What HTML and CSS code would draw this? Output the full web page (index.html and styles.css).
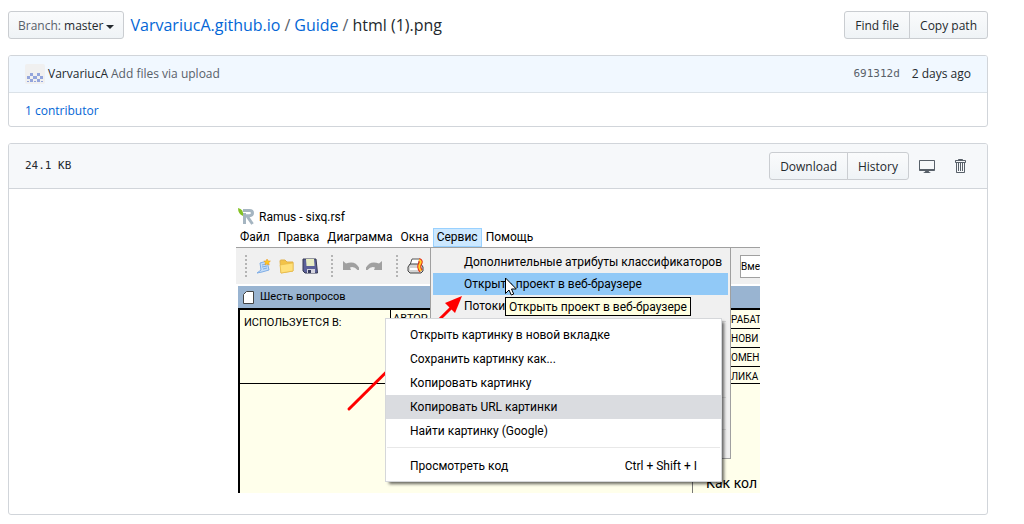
FILE: index.html
```
<!DOCTYPE html>
<html lang="en">
<head>
<meta charset="utf-8">
<title>html (1).png</title>
<link rel="stylesheet" href="styles.css">
</head>
<body>
<main class="page">
  <header class="file-nav">
    <button class="btn branch" type="button"><span class="muted">Branch:</span> <span>master</span><span class="caret"></span></button>
    <nav class="crumbs"><a class="repo" href="#">VarvariucA.github.io</a><span class="slash">/</span><a href="#">Guide</a><span class="slash">/</span><strong>html (1).png</strong></nav>
    <div class="group"><button class="btn" type="button">Find file</button><button class="btn" type="button">Copy path</button></div>
  </header>

  <section class="box commit">
    <div class="commit-row">
      <svg class="avatar" viewBox="0 0 20 20" aria-hidden="true"><rect width="20" height="20" rx="2" fill="#f0f0f0"/><path fill="#93a5dc" d="M5 9h3v3H5zM12 9h3v3h-3zM2 12h3v3H2zM8 12h4v3H8zM15 12h3v3h-3zM5 15h3v3H5zM12 15h3v3h-3zM2 17h2v1H2zM9 17h2v1H9zM16 17h2v1h-2z"/></svg>
      <a class="author" href="#">VarvariucA</a>
      <a class="message" href="#">Add files via upload</a>
      <a class="sha" href="#">691312d</a>
      <span class="date">2 days ago</span>
    </div>
    <div class="contributors"><a href="#"><strong>1</strong> contributor</a></div>
  </section>

  <section class="box file">
    <div class="file-head">
      <span class="size">24.1 KB</span>
      <div class="group"><button class="btn" type="button">Download</button><button class="btn" type="button">History</button></div>
      <button class="icon-btn" type="button" aria-label="Open in desktop"><svg width="16" height="16" viewBox="0 0 16 16"><path fill="#586069" fill-rule="evenodd" d="M15 2H1c-.55 0-1 .45-1 1v9c0 .55.45 1 1 1h5.340c-.25.610-.860 1.390-2.340 2h8c-1.480-.610-2.090-1.390-2.340-2H15c.55 0 1-.45 1-1V3c0-.55-.45-1-1-1zm0 9H1V3h14v8z"/></svg></button>
      <button class="icon-btn trash" type="button" aria-label="Delete this file"><svg width="12" height="16" viewBox="0 0 12 16"><path fill="#586069" fill-rule="evenodd" d="M11 2H9c0-.55-.45-1-1-1H5c-.55 0-1 .45-1 1H2c-.55 0-1 .45-1 1v1c0 .55.45 1 1 1v9c0 .55.45 1 1 1h7c.55 0 1-.45 1-1V5c.55 0 1-.45 1-1V3c0-.55-.45-1-1-1zm-1 12H3V5h1v8h1V5h1v8h1V5h1v8h1V5h1v9zm1-10H2V3h9v1z"/></svg></button>
    </div>

    <div class="preview">
      <div class="shot">
        <div class="win-title">
          <svg width="17" height="17" viewBox="0 0 17 17" aria-hidden="true"><path fill="none" stroke="#a5b5c1" stroke-width="3" d="M5 2.500h6.500q3 0 3 2.600t-3 2.600H7M6.500 5v11M9 8l5.500 8"/><path fill="#84c225" d="M0 0q6 1 5 8Q0 6 0 0z"/></svg>
          <span>Ramus - sixq.rsf</span>
        </div>
        <div class="menubar"><span>Файл</span><span>Правка</span><span>Диаграмма</span><span>Окна</span><span class="open">Сервис</span><span>Помощь</span></div>
        <div class="toolbar">
          <i class="grip"></i>
          <svg class="new" width="16" height="16" viewBox="0 0 16 16"><path fill="#c4ddf7" stroke="#7fade6" d="M4 5l7-2 2 9-7 2-5 1 4-3z"/><path stroke="#7fade6" d="M6 7l4-1M6 9l5-1M7 11l4-1"/><path fill="#ffc91f" stroke="#ed9b21" stroke-width=".6" d="M11 1l1 2 2.400.1-1.700 1.600.5 2.300-2.200-1.100-2 1.100.5-2.300-1.600-1.600 2.400-.2z"/></svg>
          <svg class="folder" width="16" height="16" viewBox="0 0 16 16"><path fill="#f3c348" stroke="#e0b04a" d="M1 3q0-1 1-1h4l2 2h6v9L2 15z"/><path fill="#ffe07a" stroke="#e6b842" stroke-width=".6" d="M1 7l13-2v8L2 15z"/></svg>
          <svg class="disk" width="16" height="16" viewBox="0 0 16 16"><path fill="#5c6199" stroke="#343952" d="M1 1h13l1.500 14H3L1 13z"/><path fill="#e8edc5" d="M4 1h8l.5 7h-8z"/><path fill="#d5d5df" d="M5 11h8v4H5z"/><path fill="#363b5c" d="M6 12h3v3H6z"/></svg>
          <i class="grip"></i>
          <svg class="undo" width="16" height="16" viewBox="0 0 16 16"><path fill="#a0a0a0" d="M0 3l3 2.500q9-3.500 13 4V12h-1.500q-3.500-4-7.500-2.500L8 12H0z"/></svg>
          <svg class="redo" width="16" height="16" viewBox="0 0 16 16"><path fill="#a0a0a0" d="M16 3l-3 2.500Q4 2 0 9.500V12h1.500Q5 8 9 9.500L8 12h8z"/></svg>
          <i class="grip"></i>
          <svg class="print" width="17" height="16" viewBox="0 0 17 16"><path fill="#fff" stroke="#555" d="M5 1h8l-2 6H3z"/><path fill="#d4d4d4" stroke="#444" d="M3 6h11l2 3v4l-2 2H3l-2-2V9z"/><path stroke="#fff" stroke-width="2" d="M3 11h9"/><path fill="none" stroke="#e52d18" stroke-width="4" d="M12 2q3 1 1 4t1 7"/><path fill="none" stroke="#ffcf29" stroke-width="2" d="M12 2q3 1 1 4t1 7"/></svg>
          <span class="combo">Вме</span>
        </div>
        <div class="tab"><svg width="11" height="13" viewBox="0 0 11 13" aria-hidden="true"><path fill="#fff" stroke="#444" d="M3.500.5h7v12H.5v-9z"/></svg><span>Шесть вопросов</span></div>
        <div class="diagram">
          <div class="frame">
            <div class="used">ИСПОЛЬЗУЕТСЯ В:</div>
            <div class="mid">АВТОР</div>
            <div class="states"><div>РАБАТ</div><div>НОВИ</div><div>ОМЕН</div><div>ЛИКА</div></div>
          </div>
          <div class="block">Как кол</div>
        </div>

        <div class="dropdown">
          <div>Дополнительные атрибуты классификаторов</div>
          <div class="active">Открыть проект в веб-браузере</div>
          <div>Потоки</div>
          <hr class="first"><hr class="second"><hr class="third">
        </div>
        <svg class="arrow" width="120" height="120" viewBox="0 0 120 120" aria-hidden="true"><path stroke="#f00" stroke-width="3" stroke-linecap="round" d="M3 114L106 12"/><path fill="#f00" d="M116 1l-7 17-10-10z"/></svg>
        <div class="tooltip">Открыть проект в веб-браузере</div>
        <svg class="cursor" width="12" height="19" viewBox="0 0 12 19" aria-hidden="true"><path fill="#fff" stroke="#000" d="M.5 1v15.500L4 13l2.300 5 2.400-1-2.200-5h4.800z"/></svg>
        <div class="context">
          <div>Открыть картинку в новой вкладке</div>
          <div>Сохранить картинку как...</div>
          <div>Копировать картинку</div>
          <div class="active">Копировать URL картинки</div>
          <div>Найти картинку (Google)</div>
          <hr>
          <div class="last"><span>Просмотреть код</span><span>Ctrl + Shift + I</span></div>
        </div>
      </div>
    </div>
  </section>
</main>
</body>
</html>
```
FILE: styles.css
```
* { box-sizing: border-box; }
body {
  margin: 0;
  background: #fff;
  color: #24292e;
  font: 12px/18px "Open Sans", "Noto Sans", sans-serif;
}
a { color: #0366d6; text-decoration: none; }
button { font: inherit; color: inherit; }
.page { margin: 11px 36px 0 8px; }
.file-nav { display: flex; align-items: center; margin-bottom: 16px; }
.btn {
  height: 28px;
  padding: 0 10px;
  border: 1px solid #cacdd1;
  border-radius: 3px;
  background: linear-gradient(#fafbfc, #eff3f6);
  font-weight: 500;
  line-height: 28px;
  white-space: nowrap;
}
.branch { padding: 0 9px; }
.muted { color: #586069; font-weight: 400; }
.caret {
  display: inline-block;
  margin-left: 2px;
  border: 4px solid transparent;
  border-top-color: #24292e;
  border-bottom: 0;
  vertical-align: middle;
}
.group { display: flex; }
.group .btn:first-child { border-radius: 3px 0 0 3px; }
.group .btn + .btn { margin-left: -1px; border-radius: 0 3px 3px 0; }
.crumbs { flex: 1; margin-left: 7px; font-size: 16px; line-height: 28px; }
.crumbs a.repo, .crumbs strong { font-weight: 500; }
.slash { margin: 0 4px; color: #586069; }
.box { border: 1px solid #d1d5da; border-radius: 3px; overflow: hidden; }
.commit { margin-bottom: 16px; }
.commit-row {
  display: flex;
  align-items: center;
  height: 37px;
  padding: 0 16px;
  border-bottom: 1px solid #dbe2e8;
  background: #f1f8ff;
}
.avatar { width: 20px; height: 20px; margin-right: 3px; }
.author { margin-right: 3px; color: #24292e; font-weight: 500; }
.message { flex: 1; color: #586069; }
.sha { margin-right: 12px; color: #586069; font-family: "DejaVu Sans Mono", monospace; font-size: 11px; }
.contributors { padding: 9px 16px 6px; }
.contributors strong { font-weight: 500; }
.file-head {
  display: flex;
  align-items: center;
  height: 45px;
  padding: 0 21px 0 16px;
  border-bottom: 1px solid #d1d5da;
  background: #f6f8fa;
}
.size { flex: 1; font-family: "DejaVu Sans Mono", monospace; font-size: 11px; }
.icon-btn { display: flex; margin-left: 10px; padding: 0; border: 0; background: none; }
.trash { margin-left: 19px; }

.preview { display: flex; justify-content: center; padding: 16px 0 21px; }
.shot {
  position: relative;
  width: 524px;
  height: 288px;
  overflow: hidden;
  background: #fff;
  color: #000;
  font-family: Roboto, "Open Sans", sans-serif;
  white-space: nowrap;
}
.win-title { display: flex; align-items: center; gap: 4px; height: 23px; padding-left: 2px; }
.menubar { display: flex; height: 20px; border-bottom: 1px solid #a0a0a0; line-height: 19px; }
.menubar span { padding: 0 4px; }
.menubar .open { background: #cce8ff; box-shadow: inset 0 0 0 1px #99d1ff; }
.toolbar { display: flex; align-items: center; height: 36px; padding-left: 9px; background: #f0f0f0; }
.toolbar svg { flex: none; }
.grip { width: 2px; height: 22px; background: repeating-linear-gradient(#b4b4b4 0 2px, transparent 2px 4px); }
.new { margin-left: 9px; }
.folder, .disk { margin-left: 7px; }
.disk { margin-right: 13px; }
.undo { margin-left: 10px; }
.redo { margin: 0 14px 0 7px; }
.print { margin-left: 9px; }
.combo {
  width: 20px;
  height: 23px;
  margin-left: auto;
  border: 1px solid #a0a0a0;
  border-right: 0;
  background: #fff;
  font-size: 10px;
  line-height: 21px;
}
.tab {
  display: flex;
  align-items: center;
  gap: 6px;
  height: 22px;
  margin: 2px 0 0 2px;
  padding-left: 5px;
  background: #99b4d1;
  font-size: 11px;
}
.diagram {
  height: 185px;
  margin-left: 2px;
  border-top: 2px solid #000;
  border-left: 2px solid #000;
  background: #ffffeb;
  font-size: 11px;
}
.frame { display: grid; grid-template-columns: 151px 1fr 29px; height: 74px; border-bottom: 1px solid #000; }
.used { padding: 4px; border-right: 1px solid #000; }
.mid { padding: 0 2px; }
.states { display: grid; grid-template-rows: repeat(4, 1fr); font-size: 10px; line-height: 20px; }
.states div { height: 19px; border-bottom: 1px solid #000; }
.states div:last-child { border-bottom: 0; }
.block { width: 68px; height: 109px; margin-left: auto; padding: 89px 0 0 13px; border-left: 1px solid #777; font-size: 14px; line-height: 20px; }

.dropdown {
  position: absolute;
  top: 42px;
  left: 194px;
  width: 301px;
  height: 212px;
  padding: 3px 2px;
  border: 1px solid #a0a0a0;
  background: #f0f0f0;
}
.dropdown div { height: 22px; padding-left: 31px; line-height: 22px; }
.dropdown .active { background: #91c9f7; }
.dropdown hr { height: 1px; margin: 4px 2px 0 28px; border: 0; background: #d7d7d7; }
.dropdown .second { margin-top: 75px; }
.dropdown .third { margin-top: 31px; }
.arrow { position: absolute; top: 90px; left: 110px; }
.tooltip {
  position: absolute;
  top: 92px;
  left: 269px;
  height: 19px;
  padding: 0 3px;
  border: 1px solid #000;
  background: #ffffe1;
  line-height: 18px;
}
.cursor { position: absolute; top: 72px; left: 269px; }
.context {
  position: absolute;
  top: 113px;
  left: 149px;
  width: 337px;
  height: 164px;
  padding: 4px 0;
  border: 1px solid #d5d7da;
  background: #fff;
  box-shadow: 3px 3px 3px -1px #0009;
}
.context div { height: 24px; padding: 0 24px; line-height: 24px; }
.context .active { background: #dadce0; }
.context hr { height: 1px; margin: 4px 1px 6px; border: 0; background: #e8e8e8; }
.context .last { display: flex; justify-content: space-between; }
```
